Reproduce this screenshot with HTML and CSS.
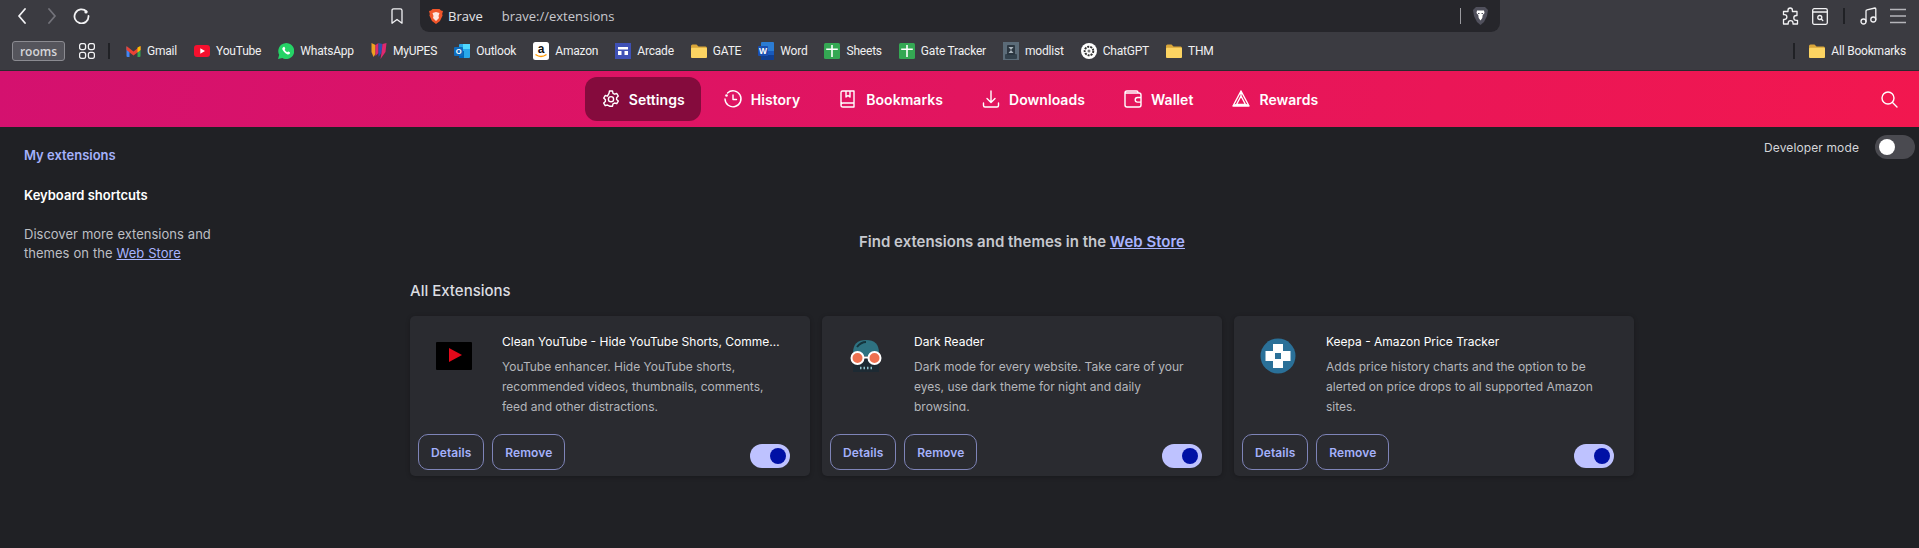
FILE: index.html
```html
<!doctype html>
<html>

<head>
    <meta charset="utf-8">
    <title>Extensions</title>
    <link rel="stylesheet" href="styles.css">
</head>

<body>

    <svg class="defs" width="0" height="0">
        <symbol id="folder" viewBox="0 0 16 16">
            <path d="M0 3q0-1.500 1.500-1.500h4L7.500 3.500H14.500q1.500 0 1.500 1.500v8.500q0 1.500-1.500 1.500h-13q-1.500 0-1.500-1.500z" fill="#d9a63a"/>
            <path d="M0 6q0-1.200 1.200-1.200h13.600q1.200 0 1.200 1.200v7.500q0 1.500-1.500 1.500h-13q-1.500 0-1.500-1.500z" fill="#fcd462"/>
        </symbol>
        <symbol id="sheet" viewBox="0 0 16 16">
            <rect width="16" height="16" rx="1.500" fill="#34a853"/>
            <path d="M7.200 2h1.600v3.500h5V7h-5v7H7.200V7h-5V5.500h5z" fill="#fff"/>
        </symbol>
    </svg>

    <div class="toolbar">
        <svg class="tb-icon back" width="8" height="16" viewBox="0 0 8 16"><path d="M7 1L1 8l6 7" class="ln"/></svg>
        <svg class="tb-icon forward" width="8" height="16" viewBox="0 0 8 16"><path d="M1 1l6 7-6 7" class="ln dim"/></svg>
        <svg class="tb-icon reload" width="17" height="16" viewBox="0 0 17 16"><path d="M13.500 3.500A7 7 0 1 0 15.500 8" class="ln"/><circle cx="13" cy="4" r="1.600" fill="#f2f2f4"/></svg>
        <svg class="tb-icon mark" width="12" height="16" viewBox="0 0 12 16"><path d="M1 2.500q0-1.700 1.700-1.700h6.600q1.700 0 1.700 1.700V15.200L6 11.500 1 15.200z" class="ln thin"/></svg>

        <div class="address">
            <svg width="14" height="15" viewBox="0 0 14 15"><path d="M3.500 0h7l1.500 1.500 2 .5-.8 3 .4 1.500-2.600 5.500L7 15l-4-3-2.600-5.500L.8 5 0 2l2-.5z" fill="#f0552a"/><path d="M3.500 4L7 3l3.500 1-1 3 .5 2-3 3-3-3 .5-2z" fill="#fff" opacity=".85"/></svg>
            <span class="site">Brave</span>
            <span class="url">brave://extensions</span>
            <span class="addr-sep"></span>
            <svg width="15" height="18" viewBox="0 0 15 18"><path d="M3 0h9l3 3-1 6-3 6-3.500 3L4 15 1 9 0 3z" fill="#50505c"/><path d="M4 3.500h7l.5 2.500-1.800 2-.4 3-1.800 2.500L5.700 11l-.4-3-1.800-2z" fill="#fff"/><path d="M5 6.500h1.500M8.500 6.500H10" stroke="#50505c"/></svg>
        </div>

        <div class="tb-right">
            <svg width="17" height="18" viewBox="0 0 17 18"><path d="M6 3.200Q6 1 8.200 1t2.200 2.200V4.500H15V8.500h-.8a2.400 2.400 0 0 0 0 4.800H15.500V17h-4.500v-1a2.400 2.400 0 0 0-4.800 0v1H1.500v-4.500h1a2.400 2.400 0 0 0 0-4.800h-1V4.500H6z" class="ln thin"/></svg>
            <svg width="16" height="17" viewBox="0 0 16 17"><rect x=".7" y=".7" width="14.600" height="15.600" rx="1.500" class="ln thin"/><path d="M1 4h14" class="ln thin"/><circle cx="7.800" cy="9.500" r="2" class="ln thin"/><path d="M9.300 11l1.500 1.500" class="ln thin"/></svg>
            <span class="tb-sep"></span>
            <svg width="17" height="18" viewBox="0 0 17 18"><circle cx="3.500" cy="14.500" r="2.500" class="ln thin"/><circle cx="13.300" cy="12.500" r="2.500" class="ln thin"/><path d="M6 14.500V4q0-1 1-1.200l8-1.800q.8 0 .8 1v10.500" class="ln thin"/></svg>
            <svg width="16" height="16" viewBox="0 0 16 16"><path d="M0 1.500h16M0 8h16M0 14.500h16" class="ln thin dim2"/></svg>
        </div>
    </div>

    <div class="bookmarks">
        <button class="rooms">rooms</button>
        <svg class="apps" width="16" height="16" viewBox="0 0 16 16"><g class="ln thin"><rect x=".6" y=".6" width="6" height="6" rx="2"/><rect x="9.400" y=".6" width="6" height="6" rx="2"/><rect x=".6" y="9.400" width="6" height="6" rx="2"/><rect x="9.400" y="9.400" width="6" height="6" rx="2"/></g></svg>
        <span class="bm-sep"></span>

        <a class="bm">
            <svg width="15" height="16" viewBox="0 0 14 16"><path d="M0 3.500V13q0 1 1 1h2V7z" fill="#4285f4"/><path d="M14 3.500V13q0 1-1 1h-2V7z" fill="#34a853"/><path d="M0 3L7 8.500 14 3v4l-7 5.500L0 7z" fill="#ea4335"/><path d="M11 4.500L14 3v4l-3 2.400z" fill="#fbbc04"/></svg>
            Gmail
        </a>
        <a class="bm">
            <svg width="16" height="16" viewBox="0 0 16 16"><rect y="2" width="16" height="12" rx="3" fill="#f5102e"/><path d="M6.300 5.300L11 8l-4.700 2.700z" fill="#fff"/></svg>
            YouTube
        </a>
        <a class="bm">
            <svg width="16" height="16" viewBox="0 0 16 16"><path d="M0 16l1.200-4.200A8 8 0 1 1 4.300 15z" fill="#25d366"/><path d="M5.500 4c.6-.5 1-.3 1.200.2l.5 1.300c.1.300 0 .6-.5 1.200.5 1.100 1.500 2 2.600 2.500.5-.6.800-.8 1.100-.6l1.300.6c.4.200.5.600.2 1.200-.5 1-1.700 1.300-2.800.9C6.700 9.500 5.300 8.300 4.400 6.400 4 5.400 4.700 4.500 5.500 4z" fill="#fff"/></svg>
            WhatsApp
        </a>
        <a class="bm">
            <svg width="16" height="18" viewBox="0 0 15 18"><path d="M0 1l4 2v9L2 15 0 10z" fill="#f0a020"/><path d="M4 3l3-2v10l-3 3z" fill="#e0286e"/><path d="M7 1l4 1-1 9-3 4z" fill="#2f4fb0"/><path d="M11 2l4-1-1 9-5 7 1-6z" fill="#e0286e"/></svg>
            MyUPES
        </a>
        <a class="bm">
            <svg width="16" height="16" viewBox="0 0 16 16"><rect x="5" y="1" width="11" height="14" rx="1" fill="#28a8ea"/><rect x="9" y="1" width="7" height="5" fill="#50d9ff"/><rect x="5" y="8" width="5" height="7" fill="#0364b8"/><rect y="4" width="9" height="9" rx="1" fill="#0f6cbd"/><text x="4.500" y="11" class="ico-text" font-size="7.500">O</text></svg>
            Outlook
        </a>
        <a class="bm">
            <svg width="16" height="18" viewBox="0 0 16 18"><rect width="16" height="18" rx="2.500" fill="#fff"/><text x="8" y="11" class="ico-text dark" font-size="12">a</text><path d="M2.500 12.500q5.500 4 11 0" fill="none" stroke="#f90" stroke-width="1.500"/></svg>
            Amazon
        </a>
        <a class="bm">
            <svg width="16" height="16" viewBox="0 0 16 16"><rect width="16" height="16" fill="#3f51b5"/><path d="M3 4h10v2.500H3zM3 8h3.500v4H3zM9.500 8H13v4H9.500z" fill="#fff"/></svg>
            Arcade
        </a>
        <a class="bm"><svg width="16" height="16"><use href="#folder"/></svg>GATE</a>
        <a class="bm">
            <svg width="16" height="18" viewBox="0 0 16 18"><rect x="3" width="13" height="18" rx="1" fill="#2b7cd3"/><rect x="3" y="13" width="13" height="5" fill="#103f91"/><rect x="3" y="9" width="13" height="4" fill="#185abd"/><rect y="4" width="10" height="10" rx="1" fill="#1a4fb0"/><text x="5" y="12" class="ico-text" font-size="8.500">W</text></svg>
            Word
        </a>
        <a class="bm"><svg width="16" height="16"><use href="#sheet"/></svg>Sheets</a>
        <a class="bm"><svg width="16" height="16"><use href="#sheet"/></svg>Gate Tracker</a>
        <a class="bm">
            <svg width="16" height="18" viewBox="0 0 16 18"><rect width="16" height="18" fill="#5b6b78"/><rect x="2" y="12" width="12" height="5" rx="1" fill="#33414c"/><rect x="4" y="3" width="8" height="10" rx="1" fill="#2b3640"/><path d="M5.500 5h5L8 8l2.500 3h-5L8 8z" fill="#aab4bc"/></svg>
            modlist
        </a>
        <a class="bm">
            <svg width="16" height="16" viewBox="0 0 16 16"><circle cx="8" cy="8" r="8" fill="#fff"/><circle cx="8" cy="8" r="4.300" fill="none" stroke="#333" stroke-width="2" stroke-dasharray="2 1"/><circle cx="8" cy="8" r="1.500" fill="#777"/></svg>
            ChatGPT
        </a>
        <a class="bm"><svg width="16" height="16"><use href="#folder"/></svg>THM</a>

        <span class="bm-sep all-sep"></span>
        <a class="bm"><svg width="16" height="16"><use href="#folder"/></svg>All Bookmarks</a>
    </div>

    <div class="rule"></div>

    <div class="header">
        <div class="tabs">
            <a class="tab tab-active">
                <svg width="20" height="20" viewBox="0 0 20 20"><path d="M8.500 2h3l.5 2.300 1.600.9 2.200-.7 1.500 2.600-1.700 1.600v1.800l1.700 1.600-1.500 2.600-2.200-.7-1.600.9-.5 2.300h-3L8 16.900l-1.600-.9-2.200.7-1.500-2.600 1.700-1.600v-1.800L2.700 9.100l1.500-2.600 2.200.7L8 4.300z" class="wl"/><circle cx="10" cy="10.200" r="2.600" class="wl"/></svg>
                Settings
            </a>
            <a class="tab">
                <svg width="20" height="20" viewBox="0 0 20 20"><path d="M4.500 4A8 8 0 1 1 2 10" class="wl"/><path d="M10 6v4.500h3.500" class="wl"/><circle cx="3.500" cy="6.500" r="1.300" fill="#fff"/></svg>
                History
            </a>
            <a class="tab">
                <svg width="20" height="20" viewBox="0 0 20 20"><path d="M3 16V3.500Q3 2 4.500 2h11.500v16H5q-2 0-2-2t2-2h11M8 2v6l2-1.500L12 8V2" class="wl"/></svg>
                Bookmarks
            </a>
            <a class="tab">
                <svg width="20" height="20" viewBox="0 0 20 20"><path d="M10 2v11M6 9.500l4 4 4-4M2.500 14v2.500q0 1.500 1.500 1.500h12q1.500 0 1.500-1.500V14" class="wl"/></svg>
                Downloads
            </a>
            <a class="tab">
                <svg width="20" height="20" viewBox="0 0 20 20"><path d="M15 4V3.500Q15 2 13.500 2H4Q2 2 2 4v12q0 2 2 2h12q2 0 2-2V6q0-2-2-2H3M18 8.500h-3.500a2.300 2.300 0 0 0 0 4.600H18" class="wl"/></svg>
                Wallet
            </a>
            <a class="tab">
                <svg width="20" height="20" viewBox="0 0 20 20"><path d="M10 2l8 15H2zM10 7l4.500 8.500h-9zM2 17l3.500-1.500M18 17l-3.500-1.500M10 2v5" class="wl"/></svg>
                Rewards
            </a>
        </div>
        <svg class="search" width="17" height="17" viewBox="0 0 17 17"><circle cx="7" cy="7" r="6" class="wl"/><path d="M11.500 11.500l4.500 4.500" class="wl"/></svg>
    </div>

    <div class="page">
        <div class="sidebar">
            <a class="side-link side-active">My extensions</a>
            <a class="side-link">Keyboard shortcuts</a>
            <p class="side-text">Discover more extensions and themes on the <a class="store-link">Web Store</a></p>
        </div>

        <div class="content">
            <div class="find">Find extensions and themes in the <a class="store-link">Web Store</a></div>
            <h2 class="all-title">All Extensions</h2>

            <div class="cards">
                <div class="card">
                    <div class="card-top">
                        <svg class="ext-icon" width="36" height="36" viewBox="0 0 36 36"><rect y="4" width="36" height="28" rx="1" fill="#000"/><path d="M13 10l13 7-13 7z" fill="#e5091a"/></svg>
                        <div class="card-text">
                            <div class="ext-name">Clean YouTube - Hide YouTube Shorts, Comments, Suggestions</div>
                            <div class="ext-desc">YouTube enhancer. Hide YouTube shorts, recommended videos, thumbnails, comments, feed and other distractions.</div>
                        </div>
                    </div>
                    <div class="card-foot">
                        <button class="btn">Details</button>
                        <button class="btn">Remove</button>
                        <span class="toggle toggle-on"><span class="knob"></span></span>
                    </div>
                </div>

                <div class="card">
                    <div class="card-top">
                        <svg class="ext-icon" width="36" height="36" viewBox="0 0 36 36">
                            <path d="M5 34V15Q5 2 18 2t13 13v19z" fill="#2e7281"/>
                            <path d="M9 9q4-5 9-5" fill="none" stroke="#14343c" stroke-width="2"/>
                            <rect x="5" y="18" width="26" height="16" fill="#1d2a33"/>
                            <circle cx="9.500" cy="20" r="6" fill="#ee7150" stroke="#fff" stroke-width="2"/>
                            <circle cx="26.500" cy="20" r="6" fill="#ee7150" stroke="#fff" stroke-width="2"/>
                            <path d="M15 19.500h6" stroke="#fff" stroke-width="2"/>
                            <path d="M12 30h1.500M15.500 30H17M19 30h1.500M22.500 30H24" stroke="#8fc1cc" stroke-width="2.500"/>
                        </svg>
                        <div class="card-text">
                            <div class="ext-name">Dark Reader</div>
                            <div class="ext-desc">Dark mode for every website. Take care of your eyes, use dark theme for night and daily browsing.</div>
                        </div>
                    </div>
                    <div class="card-foot">
                        <button class="btn">Details</button>
                        <button class="btn">Remove</button>
                        <span class="toggle toggle-on"><span class="knob"></span></span>
                    </div>
                </div>

                <div class="card">
                    <div class="card-top">
                        <svg class="ext-icon" width="36" height="36" viewBox="0 0 36 36">
                            <circle cx="18" cy="18" r="17.500" fill="#2a7098"/>
                            <path d="M13 6h10v7h7.500v10H23v7H13v-7H5.500V13H13z" fill="#fff"/>
                            <rect x="15" y="15" width="6" height="6" fill="#2a7098"/>
                        </svg>
                        <div class="card-text">
                            <div class="ext-name">Keepa - Amazon Price Tracker</div>
                            <div class="ext-desc">Adds price history charts and the option to be alerted on price drops to all supported Amazon sites.</div>
                        </div>
                    </div>
                    <div class="card-foot">
                        <button class="btn">Details</button>
                        <button class="btn">Remove</button>
                        <span class="toggle toggle-on"><span class="knob"></span></span>
                    </div>
                </div>
            </div>
        </div>

        <div class="dev-mode">
            <span>Developer mode</span>
            <span class="toggle"><span class="knob"></span></span>
        </div>
    </div>

</body>

</html>
```

FILE: styles.css
```css
* {
    box-sizing: border-box;
}

html,
body {
    margin: 0;
    height: 100%;
    overflow: hidden;
}

body {
    display: flex;
    flex-direction: column;
    background-color: #202125;
    font-family: Inter, "Liberation Sans", sans-serif;
    color: #fff;
}

.defs {
    position: absolute;
}

/* line icon helpers */
.ln {
    fill: none;
    stroke: #f2f2f4;
    stroke-width: 1.8;
    stroke-linecap: round;
    stroke-linejoin: round;
}

.ln.thin {
    stroke-width: 1.3;
}

.ln.dim {
    stroke: #73737a;
}

.ln.dim2 {
    stroke: #b5b5ba;
    stroke-width: 1.6;
}

.wl {
    fill: none;
    stroke: #fff;
    stroke-width: 1.4;
    stroke-linecap: round;
    stroke-linejoin: round;
}

.ico-text {
    font-family: "Liberation Sans", sans-serif;
    font-weight: 700;
    text-anchor: middle;
    fill: #fff;
}

.ico-text.dark {
    fill: #111;
}

/* top toolbar */
.toolbar {
    display: flex;
    align-items: center;
    height: 32px;
    flex-shrink: 0;
    padding-left: 18px;
    background-color: #3b3b41;
}

.forward {
    margin-left: 22px;
}

.reload {
    margin-left: 17px;
}

.mark {
    margin-left: 301px;
}

.address {
    display: flex;
    align-items: center;
    width: 1080px;
    height: 32px;
    margin-left: 17px;
    padding: 0 12px 0 9px;
    border-radius: 0 0 9px 9px;
    background-color: #26262b;
    font-family: "Open Sans", sans-serif;
    font-size: 13px;
    color: #e4e4e8;
}

.site {
    margin-left: 5px;
}

.url {
    margin-left: 19px;
    color: #c9c9ce;
}

.addr-sep {
    width: 1px;
    height: 16px;
    margin-left: auto;
    margin-right: 12px;
    background-color: #9a9a9f;
}

.tb-right {
    display: flex;
    align-items: center;
    margin-left: auto;
    padding-right: 13px;
    gap: 13px;
}

.tb-sep {
    width: 2px;
    height: 16px;
    margin: 0 2px;
    background-color: #202125;
}

/* bookmarks bar */
.bookmarks {
    display: flex;
    align-items: center;
    height: 38px;
    flex-shrink: 0;
    padding: 0 13px 0 12px;
    background-color: #3b3b41;
    font-family: Roboto, sans-serif;
    font-size: 12px;
    letter-spacing: -0.2px;
    color: #f0f0f2;
}

.rooms {
    width: 53px;
    height: 20px;
    padding: 0;
    border: 1px solid #8b8b91;
    border-radius: 3px;
    background-color: #55555c;
    font-family: "Open Sans", sans-serif;
    font-size: 12px;
    font-weight: 600;
    color: #d5d5d9;
}

.apps {
    margin-left: 14px;
}

.bm-sep {
    width: 2px;
    height: 16px;
    margin: 0 16px 0 13px;
    background-color: #202125;
}

.all-sep {
    margin-left: auto;
    margin-right: 14px;
}

.bm {
    display: flex;
    align-items: center;
    gap: 6px;
    margin-right: 17px;
    white-space: nowrap;
}

.bm:last-child {
    margin-right: 0;
}

.bm svg {
    flex-shrink: 0;
}

.rule {
    height: 1px;
    flex-shrink: 0;
    background-color: #2a2a2e;
}

/* pink header */
.header {
    display: flex;
    align-items: center;
    justify-content: center;
    position: relative;
    height: 56px;
    flex-shrink: 0;
    background: linear-gradient(100deg, #d4116f 0%, #e2155f 50%, #f2174f 100%);
}

.tabs {
    display: flex;
    align-items: center;
    gap: 6px;
}

.tab {
    display: flex;
    align-items: center;
    gap: 8px;
    height: 44px;
    padding: 0 16px;
    border-radius: 12px;
    font-size: 14px;
    font-weight: 600;
    letter-spacing: 0.05px;
    color: #fff;
}

.tab-active {
    background-color: #850b3d;
}

.search {
    position: absolute;
    right: 21px;
    top: 20px;
}

/* page body */
.page {
    display: flex;
    flex: 1;
    min-height: 0;
}

.sidebar {
    display: flex;
    flex-direction: column;
    gap: 20px;
    width: 230px;
    padding: 18px 0 0 24px;
    font-size: 13px;
    line-height: 20px;
}

.side-link {
    font-weight: 600;
}

.side-active {
    color: #a4b1fb;
}

.side-text {
    width: 195px;
    margin: 0;
    line-height: 19px;
    word-spacing: 0.4px;
    color: #bdbfc4;
}

.store-link {
    color: #a9b4ff;
    text-decoration: underline;
}

.content {
    width: 1224px;
    flex-shrink: 0;
    margin-left: 180px;
    padding-top: 105px;
}

.find {
    font-size: 15px;
    font-weight: 600;
    line-height: 20px;
    text-align: center;
    color: #c6c8ce;
}

.all-title {
    margin: 27px 0 13px;
    font-size: 15px;
    font-weight: 500;
    line-height: 24px;
    color: #dcdde1;
}

.cards {
    display: grid;
    grid-template-columns: repeat(3, 400px);
    gap: 12px;
}

.card {
    display: flex;
    flex-direction: column;
    justify-content: space-between;
    height: 160px;
    padding: 16px 20px 6px 8px;
    border-radius: 5px;
    background-color: #2a2b30;
    box-shadow: 0 1px 4px rgba(0, 0, 0, 0.25);
}

.card-top {
    display: flex;
    gap: 30px;
    padding-left: 18px;
}

.ext-icon {
    flex-shrink: 0;
    margin-top: 6px;
}

.card-text {
    width: 280px;
}

.ext-name {
    overflow: hidden;
    font-size: 12px;
    font-weight: 400;
    line-height: 20px;
    white-space: nowrap;
    text-overflow: ellipsis;
}

.ext-desc {
    max-height: 54px;
    margin-top: 5px;
    overflow: hidden;
    font-size: 12px;
    line-height: 20px;
    color: #b4b6bb;
}

.card-foot {
    display: flex;
    align-items: center;
    gap: 8px;
}

.btn {
    height: 36px;
    padding: 0 12px;
    border: 1px solid #7e84b8;
    border-radius: 10px;
    background: none;
    font-family: Inter, sans-serif;
    font-size: 12px;
    font-weight: 600;
    letter-spacing: 0.07px;
    color: #a4b1fb;
}

.toggle {
    display: flex;
    align-items: center;
    width: 40px;
    height: 24px;
    padding: 0 4px;
    border-radius: 12px;
    background-color: #4a4a50;
}

.toggle-on {
    justify-content: flex-end;
    margin-left: auto;
    margin-top: 8px;
    background-color: #bec2ff;
}

.knob {
    width: 16px;
    height: 16px;
    border-radius: 50%;
    background-color: #fff;
}

.toggle-on .knob {
    background-color: #0010a5;
}

.dev-mode {
    display: flex;
    flex: 1;
    align-items: center;
    justify-content: flex-end;
    align-self: flex-start;
    gap: 16px;
    padding: 8px 4px 0 0;
    font-size: 12px;
    letter-spacing: 0.12px;
    color: #d4d5d9;
}
```
